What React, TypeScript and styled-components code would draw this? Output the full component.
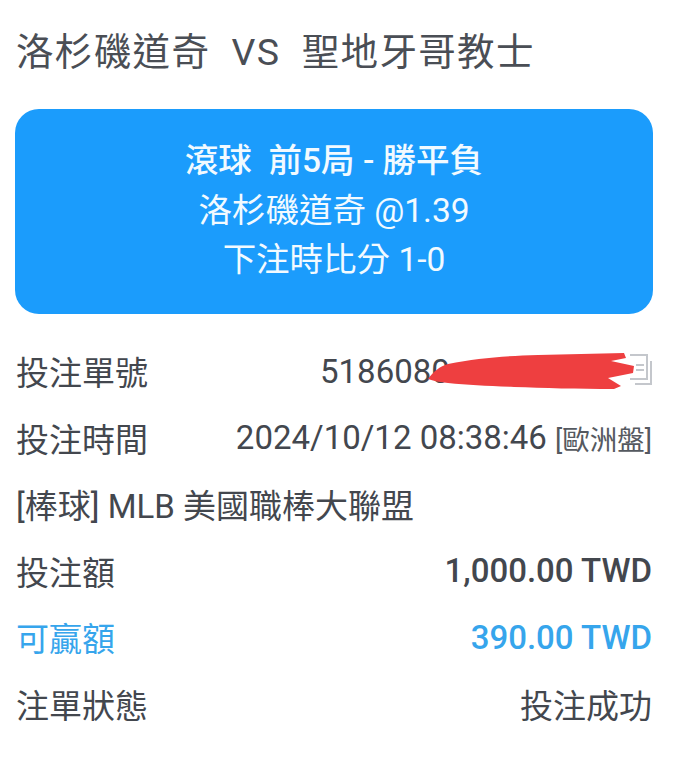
import React from "react";
import styled, { createGlobalStyle } from "styled-components";

const Global = createGlobalStyle`
  html, body { margin: 0; padding: 0; background: #fff; }
  body { font-family: Roboto, "Noto Sans CJK TC", sans-serif; }
`;
const Page = styled.div`
  width: 674px; height: 783px; box-sizing: border-box; padding: 28px 22px 0 16px;
  overflow: hidden; color: #43474e; background: #fff;
`;
const Title = styled.h1`
  margin: 0; font-size: 37.5px; line-height: 48px; font-weight: 400; letter-spacing: 1.35px;
  color: #4a4e55; white-space: pre;
`;
const Card = styled.section`
  margin: 33px -1px 0 -1px; height: 205px; box-sizing: border-box; padding-top: 27px;
  background: #1b9cfc; border-radius: 24px; color: #f2faff; text-align: center;
  display: flex; flex-direction: column; align-items: center;
`;
const CardLine = styled.div<{ $bold?: boolean }>`
  font-size: 33.5px; line-height: 49.5px; font-weight: ${p => (p.$bold ? 500 : 400)}; white-space: pre;
`;
const Rows = styled.div`
  margin-top: 24px; display: flex; flex-direction: column; gap: 0;
`;
const Row = styled.div<{ $accent?: boolean }>`
  height: 66.5px; display: flex; align-items: center; justify-content: space-between;
  font-size: 33px; color: ${p => (p.$accent ? "#36a5ec" : "#43474e")}; white-space: pre;
`;
const Value = styled.span<{ $strong?: boolean }>`
  font-weight: ${p => (p.$strong ? 500 : 400)};
  position: relative; display: inline-flex; align-items: center;
`;
const Small = styled.span`
  font-size: 27.5px; margin-left: 8px; color: #555960;
`;
const Ticket = styled(Value)`
  width: 332px;
`;
const CopyIcon = styled.svg`
  position: absolute; right: 0; top: 0; width: 26px; height: 34px;
`;
const Scribble = styled.svg`
  position: absolute; left: 108px; top: 0; width: 210px; height: 42px;
`;

export default function App() {
  return (
    <Page>
      <Global />
      <Title>洛杉磯道奇  VS  聖地牙哥教士</Title>
      <Card>
        <CardLine $bold>滾球  前5局 - 勝平負</CardLine>
        <CardLine>洛杉磯道奇 @1.39</CardLine>
        <CardLine>下注時比分 1-0</CardLine>
      </Card>
      <Rows>
        <Row>
          <span>投注單號</span>
          <Ticket>
            5186080
            <CopyIcon viewBox="0 0 26 34" fill="none" stroke="#c4c7cc" strokeWidth="2">
              <path d="M4 3h17v24H4M10 13h8M10 18h8" />
              <path d="M25 9v23H9" />
            </CopyIcon>
            <Scribble viewBox="0 0 210 42">
              <path
                d="M0 27C5 20 12 14 20 12C50 6 75 4 110 3L196 1L198 6L183 9L206 14L205 21L180 26L193 34L186 37C150 37 115 36 86 35C60 34 40 33 20 31C12 30 5 29 0 27Z"
                fill="#ee3f40"
              />
            </Scribble>
          </Ticket>
        </Row>
        <Row>
          <span>投注時間</span>
          <Value>2024/10/12 08:38:46<Small>[歐洲盤]</Small></Value>
        </Row>
        <Row><span>[棒球] MLB 美國職棒大聯盟</span></Row>
        <Row>
          <span>投注額</span>
          <Value $strong>1,000.00 TWD</Value>
        </Row>
        <Row $accent>
          <span>可贏額</span>
          <Value $strong>390.00 TWD</Value>
        </Row>
        <Row>
          <span>注單狀態</span>
          <Value>投注成功</Value>
        </Row>
      </Rows>
    </Page>
  );
}
